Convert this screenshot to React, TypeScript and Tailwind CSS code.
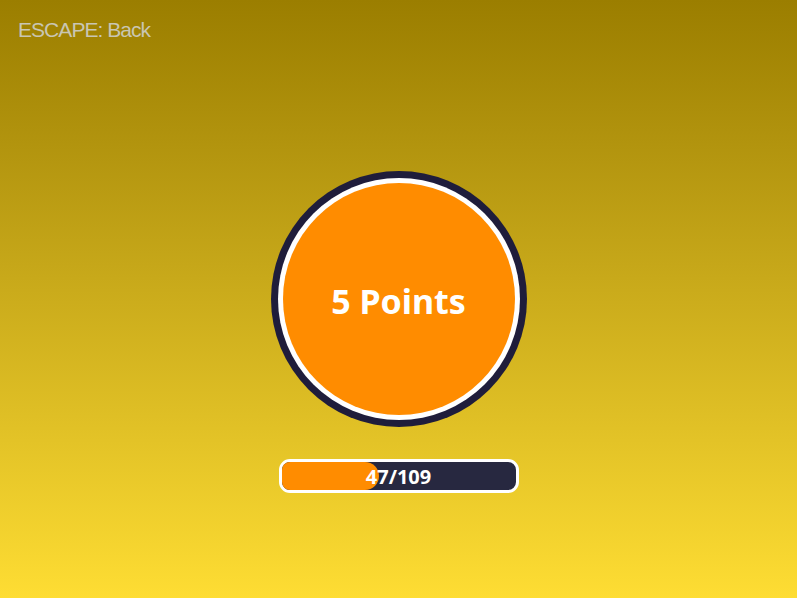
export default function App() {
  return (
    <div className="relative flex h-[598px] w-[797px] flex-col items-center overflow-hidden bg-gradient-to-b from-[#9b7e00] to-[#fedd33]">
      <div className="absolute left-[18px] top-[17px] font-['Liberation_Sans',sans-serif] text-[21px] leading-[26px] tracking-[-0.95px] text-[#c9c6b3]">
        ESCAPE: Back
      </div>
      <div className="mt-[171px] flex h-[256px] w-[256px] items-center justify-center rounded-full bg-[#1f1d3b] p-[7px]">
        <div className="flex h-full w-full items-center justify-center rounded-full bg-white p-[5px]">
          <div className="flex h-full w-full items-center justify-center rounded-full bg-[#ff8c00]">
            <span className="pt-[3px] font-['Noto_Sans',sans-serif] text-[34px] font-bold leading-none text-white">
              5 Points
            </span>
          </div>
        </div>
      </div>
      <div className="mt-[32px] h-[34px] w-[240px] rounded-[11px] border-[3px] border-white bg-[#272840]">
        <div className="relative h-full w-full overflow-hidden rounded-[8px]">
          <div className="h-full w-[97px] rounded-r-full bg-[#ff8c00]" />
          <div className="absolute inset-0 flex items-center justify-center pt-[1px] font-['Noto_Sans',sans-serif] text-[20px] font-bold leading-none text-white">
            47/109
          </div>
        </div>
      </div>
    </div>
  );
}
